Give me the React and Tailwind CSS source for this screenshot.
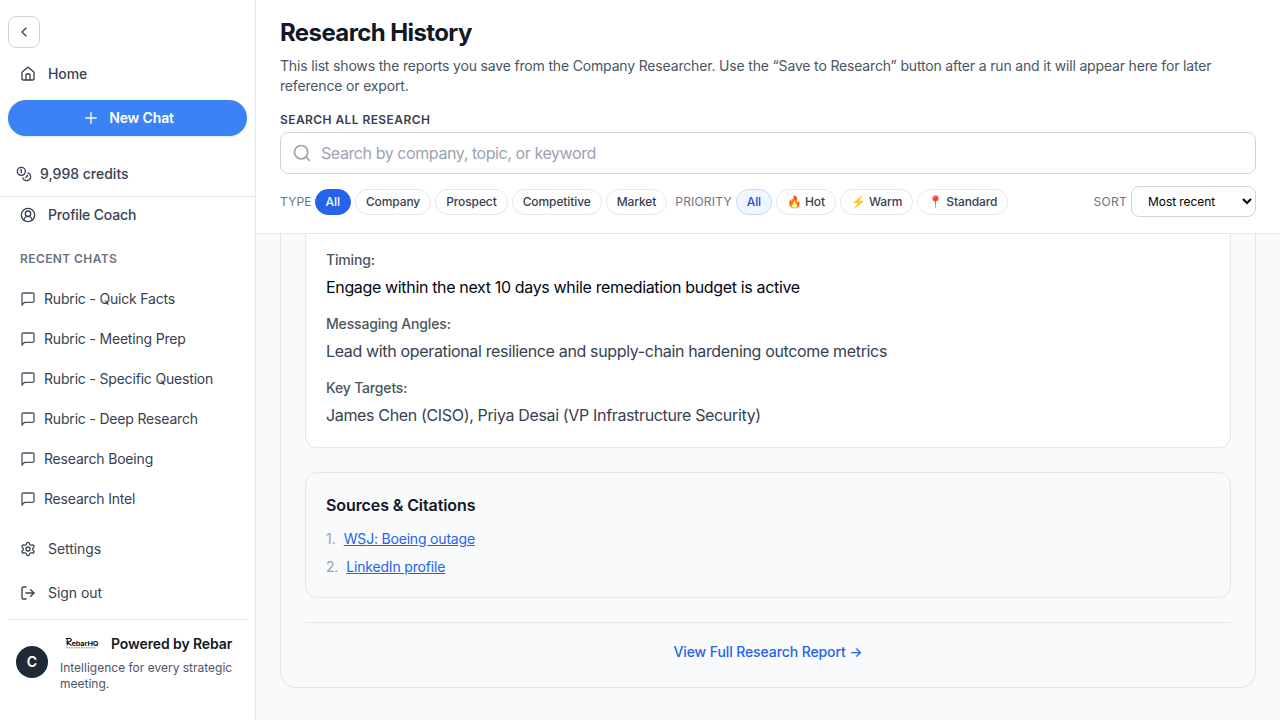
import React from "react";
import { House, ChevronLeft, Plus, Coins, CircleUserRound, Settings, LogOut, Search } from "lucide-react";

const chats = [
  "Rubric - Quick Facts",
  "Rubric - Meeting Prep",
  "Rubric - Specific Question",
  "Rubric - Deep Research",
  "Research Boeing",
  "Research Intel",
];

function ChatIcon() {
  return (
    <svg className="size-4 shrink-0 text-[#4b5563]" viewBox="0 0 24 24" fill="none" stroke="currentColor" strokeWidth="2" strokeLinecap="round" strokeLinejoin="round">
      <path d="M21 15a2 2 0 0 1-2 2H7l-4 4V5a2 2 0 0 1 2-2h14a2 2 0 0 1 2 2z" />
    </svg>
  );
}

function Logo() {
  return (
    <svg className="h-4 w-10 shrink-0" viewBox="0 0 40 16">
      <path d="M1.8 2.5h4.2c1.6 0 1.8 2.6 0 2.8L3.4 6.3l4 3.3M3.2 3.1v6.5" fill="none" stroke="#111" strokeWidth="1.2" />
      <text x="7.4" y="9.6" fontSize="6.6" fontWeight="700" fill="#111" textLength="27" lengthAdjust="spacingAndGlyphs">ebarHQ</text>
      <path d="M2 11.8h29" stroke="#777" strokeWidth="0.9" strokeDasharray="1.6 0.9" />
    </svg>
  );
}

function Sidebar() {
  return (
    <aside className="flex h-full w-64 shrink-0 flex-col border-r border-[#e5e7eb] bg-white text-sm text-[#374151]">
      <div className="flex flex-col px-2 pt-4">
        <button className="flex size-8 items-center justify-center rounded-lg border border-[#d1d5db]">
          <ChevronLeft className="size-4" />
        </button>
        <a className="mt-2 flex h-9 items-center gap-3 px-3 font-medium tracking-[-0.1px]">
          <House className="size-4" />
          Home
        </a>
        <button className="mt-2 flex h-9 items-center justify-center gap-[9px] rounded-full bg-[#3b82f6] pl-px font-semibold tracking-[-0.15px] text-white shadow-sm">
          <Plus className="size-[18px]" strokeWidth={1.8} />
          New Chat
        </button>
      </div>
      <div className="mt-4 flex h-[45px] items-center gap-2 border-b border-[#e5e7eb] px-4 font-medium">
        <Coins className="size-4" />
        9,998 credits
      </div>
      <div className="flex flex-col px-2">
        <a className="flex h-9 items-center gap-3 px-3 font-medium tracking-[-0.15px]">
          <CircleUserRound className="size-4" />
          Profile Coach
        </a>
        <h3 className="mt-[18px] px-3 text-xs leading-4 font-semibold tracking-[0.4px] text-[#6b7280]">RECENT CHATS</h3>
        <div className="mt-3.5 flex flex-col gap-1">
          {chats.map((c) => (
            <a key={c} className="flex h-9 items-center gap-2 px-3 tracking-[-0.18px]">
              <ChatIcon />
              {c}
            </a>
          ))}
        </div>
        <div className="mt-3.5 flex flex-col gap-2 tracking-[-0.05px]">
          <a className="flex h-9 items-center gap-3 px-3">
            <Settings className="size-4" />
            Settings
          </a>
          <a className="flex h-9 items-center gap-3 px-3">
            <LogOut className="size-4" />
            Sign out
          </a>
        </div>
        <div className="mt-2 flex items-center gap-3 border-t border-[#e5e7eb] px-2 pt-3.5">
          <div className="flex size-8 shrink-0 items-center justify-center rounded-full bg-[#1f2937] font-semibold text-white">C</div>
          <div className="-mb-0.5">
            <div className="flex items-center gap-[7px] pl-1 font-semibold tracking-[-0.1px] whitespace-nowrap text-[#111827]">
              <Logo />
              Powered by Rebar
            </div>
            <p className="mt-1.5 text-xs leading-4 text-[#4b5563]">Intelligence for every strategic meeting.</p>
          </div>
        </div>
      </div>
    </aside>
  );
}

function Chip({ children, tone = "plain" }) {
  const tones = {
    plain: "border-[#e5e7eb] bg-white text-[#374151]",
    solid: "border-[#2563eb] bg-[#2563eb] text-white",
    soft: "border-[#bfdbfe] bg-[#eff6ff] text-[#1d4ed8]",
  };
  return <button className={"rounded-full border px-2.5 py-1 text-xs leading-4 font-medium tracking-[-0.1px] whitespace-nowrap " + tones[tone]}>{children}</button>;
}

function Header() {
  return (
    <header className="shrink-0 border-b border-[#e5e7eb] bg-white px-6 py-4">
      <h1 className="pt-px text-2xl leading-8 font-bold tracking-tight text-[#111827]">Research History</h1>
      <p className="mt-[7px] text-sm leading-5 tracking-[-0.167px] text-[#4b5563]">
        This list shows the reports you save from the Company Researcher. Use the “Save to Research” button after a run and it will appear here for later reference or export.
      </p>
      <div className="mt-4 text-xs leading-4 font-semibold tracking-[0.42px] text-[#374151]">SEARCH ALL RESEARCH</div>
      <div className="mt-1 flex h-[42px] items-center gap-[9px] rounded-lg border border-[#d1d5db] px-3 text-base text-[#9ca3af]">
        <Search className="-ml-px size-5" />
        <span className="tracking-[-0.42px]">Search by company, topic, or keyword</span>
      </div>
      <div className="mt-3 flex h-[31px] items-center gap-1 text-xs text-[#6b7280]">
        <span className="-mr-px tracking-[0.15px]">TYPE</span>
        <Chip tone="solid">All</Chip>
        <Chip>Company</Chip>
        <Chip>Prospect</Chip>
        <Chip>Competitive</Chip>
        <Chip>Market</Chip>
        <span className="ml-1 tracking-[0.2px]">PRIORITY</span>
        <Chip tone="soft">All</Chip>
        <Chip>🔥 Hot</Chip>
        <Chip>⚡ Warm</Chip>
        <Chip>📍 Standard</Chip>
        <span className="ml-auto tracking-wide">SORT</span>
        <select className="h-[31px] w-[125px] rounded-lg border border-[#d1d5db] bg-white px-3 text-xs tracking-[-0.07px] text-black">
          <option>Most recent</option>
        </select>
      </div>
    </header>
  );
}

function Field({ label, children, dark }) {
  return (
    <div>
      <div className="text-sm leading-5 font-medium tracking-[-0.17px] text-[#4b5563]">{label}</div>
      <p className={"-mb-px pt-[5px] text-base leading-6 tracking-[-0.345px] " + (dark ? "text-[#030712]" : "text-[#374151]")}>{children}</p>
    </div>
  );
}

export default function App() {
  return (
    <div className="flex h-[720px] w-[1280px] overflow-hidden bg-[#f9fafb] font-['Inter',sans-serif]">
      <Sidebar />
      <main className="flex min-w-0 flex-1 flex-col bg-[#f9fafc]">
        <Header />
        <section className="flex min-h-0 flex-1 flex-col px-6">
          <div className="h-[454px] rounded-b-2xl border border-t-0 border-[#e5e7eb] px-6">
            <div className="flex h-[214px] flex-col gap-4 rounded-b-xl border border-t-0 border-[#e5e7eb] bg-white px-5 pt-4">
              <Field label="Timing:" dark>Engage within the next 10 days while remediation budget is active</Field>
              <Field label="Messaging Angles:">Lead with operational resilience and supply-chain hardening outcome metrics</Field>
              <Field label="Key Targets:">James Chen (CISO), Priya Desai (VP Infrastructure Security)</Field>
            </div>
            <div className="mt-6 h-[126px] rounded-xl border border-[#e5e7eb] p-5">
              <h3 className="text-base leading-6 font-semibold tracking-[-0.1px] text-[#111827]">Sources &amp; Citations</h3>
              <ol className="mt-3 flex flex-col gap-2 text-sm leading-5">
                <li className="flex gap-2"><span className="text-[#9ca3af]">1.</span><a className="tracking-[-0.19px] text-[#2563eb] underline">WSJ: Boeing outage</a></li>
                <li className="flex gap-2"><span className="tracking-[-0.2px] text-[#9ca3af]">2.</span><a className="tracking-[-0.17px] text-[#2563eb] underline">LinkedIn profile</a></li>
              </ol>
            </div>
            <div className="mt-6 border-t border-[#e5e7eb] pt-[19px] text-center text-sm leading-5 font-medium tracking-[-0.1px] text-[#2563eb]">View Full Research Report →</div>
          </div>
        </section>
      </main>
    </div>
  );
}
